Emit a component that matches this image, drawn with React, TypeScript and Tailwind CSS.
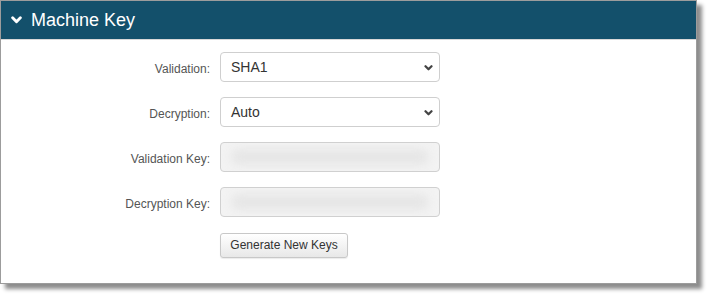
function Chevron({ className }: { className?: string }) {
  return (
    <svg viewBox="0 0 10 7" className={className} fill="none">
      <polyline points="1.5,1.5 5,5 8.5,1.5" stroke="currentColor" strokeWidth="2.6" strokeLinecap="round" strokeLinejoin="round" />
    </svg>
  );
}

function Row({ label, children }: { label: string; children: React.ReactNode }) {
  return (
    <div className="flex items-center">
      <label className="w-[210px] text-right text-[12px] text-[#555] pr-px pt-[3px]">{label}</label>
      <div className="ml-[9px] w-[220px]">{children}</div>
    </div>
  );
}

function SelectBox({ value }: { value: string }) {
  return (
    <div className="relative h-[30px] rounded-[4px] border border-[#cfcfcf] bg-white flex items-center pl-[10px] text-[14px] text-[#333]">
      {value}
      <Chevron className="absolute right-[6px] top-[12px] w-[9px] h-[6px] text-[#444]" />
    </div>
  );
}

// redacted key value: soft blurred smear, no readable text
function KeyBox() {
  return (
    <div className="h-[30px] rounded-[4px] border border-[#d0d0d0] bg-[#f3f3f3] overflow-hidden flex items-center px-[10px]">
      <div className="h-[16px] flex-1 rounded-full bg-[#e6e6e6] blur-[5px]" />
    </div>
  );
}

export default function App() {
  return (
    <div className="w-[712px] h-[300px] bg-white font-['Liberation_Sans',Arial,sans-serif]">
      <div className="w-[697px] h-[284px] border border-[#9c9c9c] bg-white shadow-[5px_5px_4px_rgba(0,0,0,0.45)] flex flex-col">
        <div className="h-[39px] bg-[#13506b] flex items-center border-b border-[#d8d8d8]">
          <Chevron className="ml-[10px] w-[11px] h-[8px] text-white" />
          <span className="ml-[9px] text-[18px] text-white">Machine Key</span>
        </div>
        <div className="flex flex-col gap-[15px] pt-[12px]">
          <Row label="Validation:">
            <SelectBox value="SHA1" />
          </Row>
          <Row label="Decryption:">
            <SelectBox value="Auto" />
          </Row>
          <Row label="Validation Key:">
            <KeyBox />
          </Row>
          <Row label="Decryption Key:">
            <KeyBox />
          </Row>
          <div className="pl-[219px]">
            <button className="h-[25px] w-[128px] rounded-[3px] border border-[#c8c8c8] bg-gradient-to-b from-white to-[#e8e8e8] text-[12px] text-[#333] shadow-[0_1px_1px_rgba(0,0,0,0.08)]">
              Generate New Keys
            </button>
          </div>
        </div>
      </div>
    </div>
  );
}
